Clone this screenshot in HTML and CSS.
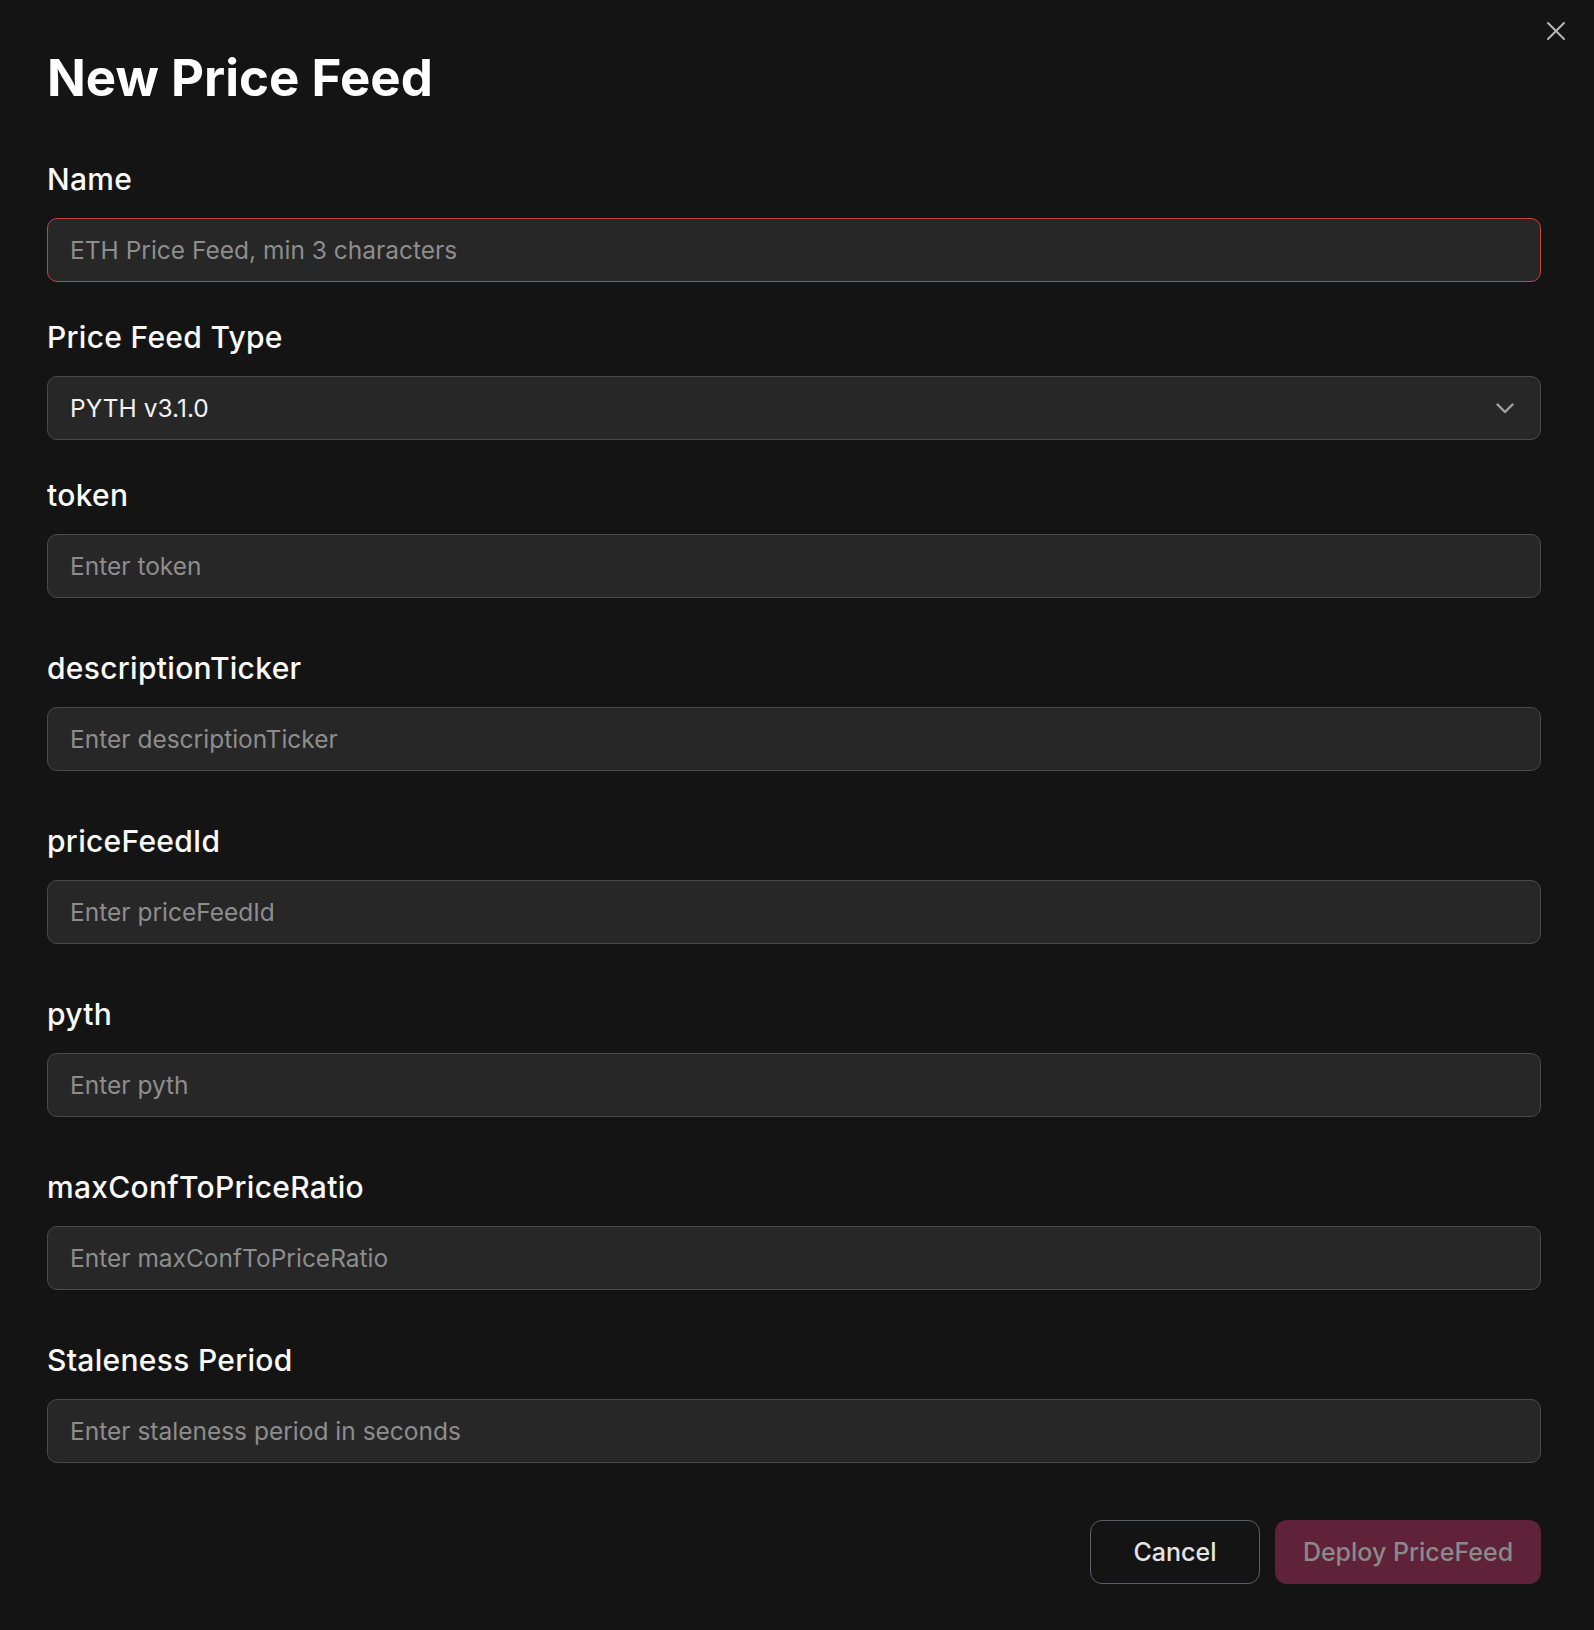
FILE: index.html
```html
<!DOCTYPE html>
<html lang="en">
<head>
<meta charset="utf-8">
<title>New Price Feed</title>
<link rel="stylesheet" href="styles.css">
</head>
<body>
<div class="modal">
  <button class="close" aria-label="Close">
    <svg width="20" height="20" viewBox="0 0 20 20" fill="none" stroke="currentColor" stroke-width="2" stroke-linecap="round"><path d="M2 2 L18 18 M18 2 L2 18"/></svg>
  </button>
  <h1 class="title">New Price Feed</h1>
  <form class="form">
    <div class="field">
      <label class="label">Name</label>
      <input class="input input-error" type="text" placeholder="ETH Price Feed, min 3 characters">
    </div>
    <div class="field">
      <label class="label">Price Feed Type</label>
      <div class="input select">
        <span class="select-value">PYTH v3.1.0</span>
        <svg class="chevron" width="18" height="11" viewBox="0 0 18 11" fill="none" stroke="currentColor" stroke-width="2.4" stroke-linecap="round" stroke-linejoin="round"><path d="M1.5 1.5 L9 9 L16.5 1.5"/></svg>
      </div>
    </div>
    <div class="field field-dynamic">
      <label class="label">token</label>
      <input class="input" type="text" placeholder="Enter token">
    </div>
    <div class="field field-dynamic">
      <label class="label">descriptionTicker</label>
      <input class="input" type="text" placeholder="Enter descriptionTicker">
    </div>
    <div class="field field-dynamic">
      <label class="label">priceFeedId</label>
      <input class="input" type="text" placeholder="Enter priceFeedId">
    </div>
    <div class="field field-dynamic">
      <label class="label">pyth</label>
      <input class="input" type="text" placeholder="Enter pyth">
    </div>
    <div class="field field-dynamic">
      <label class="label">maxConfToPriceRatio</label>
      <input class="input" type="text" placeholder="Enter maxConfToPriceRatio">
    </div>
    <div class="field">
      <label class="label">Staleness Period</label>
      <input class="input" type="text" placeholder="Enter staleness period in seconds">
    </div>
  </form>
  <div class="footer">
    <button class="btn btn-cancel" type="button">Cancel</button>
    <button class="btn btn-deploy" type="button">Deploy PriceFeed</button>
  </div>
</div>
</body>
</html>
```

FILE: styles.css
```css
* { box-sizing: border-box; }

html, body {
  margin: 0;
  background: #141414;
}

body {
  font-family: Inter, "Noto Sans", "Liberation Sans", sans-serif;
  color: #fafafa;
}

.modal {
  position: relative;
  min-height: 1630px;
  padding: 48px 53px 0 47px;
}

.close {
  position: absolute;
  top: 21px;
  right: 28px;
  width: 20px;
  height: 20px;
  padding: 0;
  border: 0;
  background: transparent;
  color: #b8b8b8;
  display: flex;
}

.title {
  margin: 0;
  font-size: 51px;
  line-height: 60px;
  font-weight: 700;
  letter-spacing: 0;
  color: #ffffff;
}

.form {
  margin-top: 53px;
  display: flex;
  flex-direction: column;
  gap: 37px;
}

.field {
  display: flex;
  flex-direction: column;
  gap: 21px;
}

.field-dynamic {
  padding-bottom: 15px;
}

.label {
  font-size: 30px;
  line-height: 36px;
  font-weight: 500;
  letter-spacing: 0.3px;
  color: #fafafa;
}

.input {
  width: 100%;
  height: 64px;
  padding: 0 22px;
  background: #272727;
  border: 1px solid #4a4a4a;
  border-radius: 10px;
  font-family: inherit;
  font-size: 24.5px;
  color: #f0f0f0;
  outline: none;
}

.input::placeholder {
  color: #8d8d8d;
}

.input-error {
  border-color: #c4453e;
}

.select {
  display: flex;
  align-items: center;
  justify-content: space-between;
  padding-right: 26px;
}

.select-value {
  color: #f2f2f2;
}

.chevron {
  color: #a3a3a3;
}

.footer {
  margin-top: 57px;
  display: flex;
  justify-content: flex-end;
  gap: 15px;
}

.btn {
  height: 64px;
  border-radius: 12px;
  font-family: inherit;
  font-size: 25px;
  font-weight: 500;
}

.btn-cancel {
  width: 170px;
  background: #141414;
  border: 1px solid #5c606a;
  color: #e4e4e4;
}

.btn-deploy {
  width: 266px;
  background: #5f2239;
  border: 0;
  color: #8a8a8a;
}
```
